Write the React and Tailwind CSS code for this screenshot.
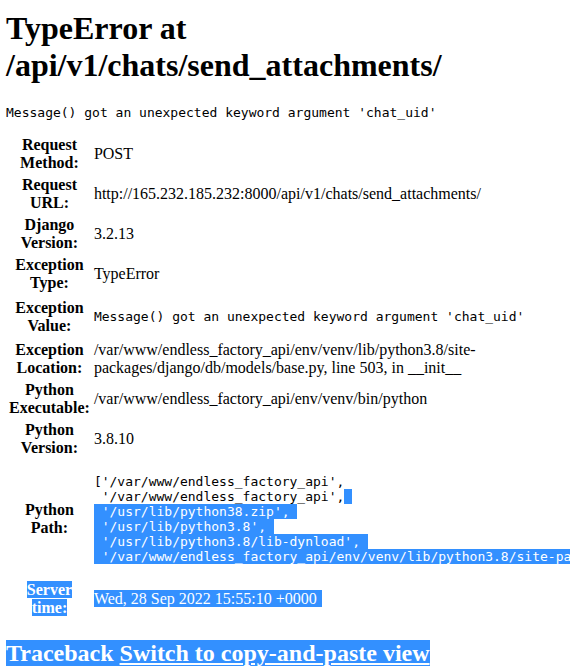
import React from "react";

const sel = "bg-[#3390ff] text-white";
const mono = "font-['DejaVu_Sans_Mono',monospace] text-[13px] leading-[normal] whitespace-pre";

const rows = [
  ["Request Method:", "POST"],
  ["Request URL:", "http://165.232.185.232:8000/api/v1/chats/send_attachments/"],
  ["Django Version:", "3.2.13"],
  ["Exception Type:", "TypeError"],
  ["Exception Value:", <pre className={`${mono} my-[13px]`}>Message() got an unexpected keyword argument 'chat_uid'</pre>],
  [
    "Exception Location:",
    "/var/www/endless_factory_api/env/venv/lib/python3.8/site-packages/django/db/models/base.py, line 503, in __init__",
  ],
  ["Python Executable:", "/var/www/endless_factory_api/env/venv/bin/python"],
  ["Python Version:", "3.8.10"],
  [
    "Python Path:",
    <pre className={`${mono} my-[13px]`}>
      {"['/var/www/endless_factory_api',\n '/var/www/endless_factory_api',"}
      <span className={sel}>
        {
          " \n '/usr/lib/python38.zip', \n '/usr/lib/python3.8', \n '/usr/lib/python3.8/lib-dynload', \n '/var/www/endless_factory_api/env/venv/lib/python3.8/site-packages']"
        }
      </span>
    </pre>,
  ],
  [
    <span className={sel}>Server time:</span>,
    <span className={`${sel} pr-[5px]`}>Wed, 28 Sep 2022 15:55:10 +0000</span>,
  ],
];

export default function App() {
  return (
    <div className="w-[570px] h-[668px] overflow-hidden bg-white text-black font-['Liberation_Serif',serif] text-[16px] leading-[normal]">
      <div className="pl-[6px]">
        {/* Summary */}
        <div>
          <h1 className="text-[32px] font-bold mt-[9.6px] mb-[21.44px]">
            TypeError at /api/v1/chats/send_attachments/
          </h1>
          <pre className={`${mono} my-[13px]`}>Message() got an unexpected keyword argument 'chat_uid'</pre>
          <table className="border-separate border-spacing-[2px]">
            <tbody>
              {rows.map(([label, value], i) => (
                <tr key={i} className="align-middle">
                  <th className="p-[1px] font-bold text-center align-middle">{label}</th>
                  <td className="p-[1px] align-middle">{value}</td>
                </tr>
              ))}
            </tbody>
          </table>
        </div>

        {/* Traceback */}
        <div>
          <h2 className="text-[24px] font-bold mt-[19.92px] mb-[19.92px]">
            <span className={sel}>
              Traceback{" "}
              <span>
                <a href="#" className="underline">
                  Switch to copy-and-paste view
                </a>
              </span>
            </span>
          </h2>
        </div>
      </div>
    </div>
  );
}
